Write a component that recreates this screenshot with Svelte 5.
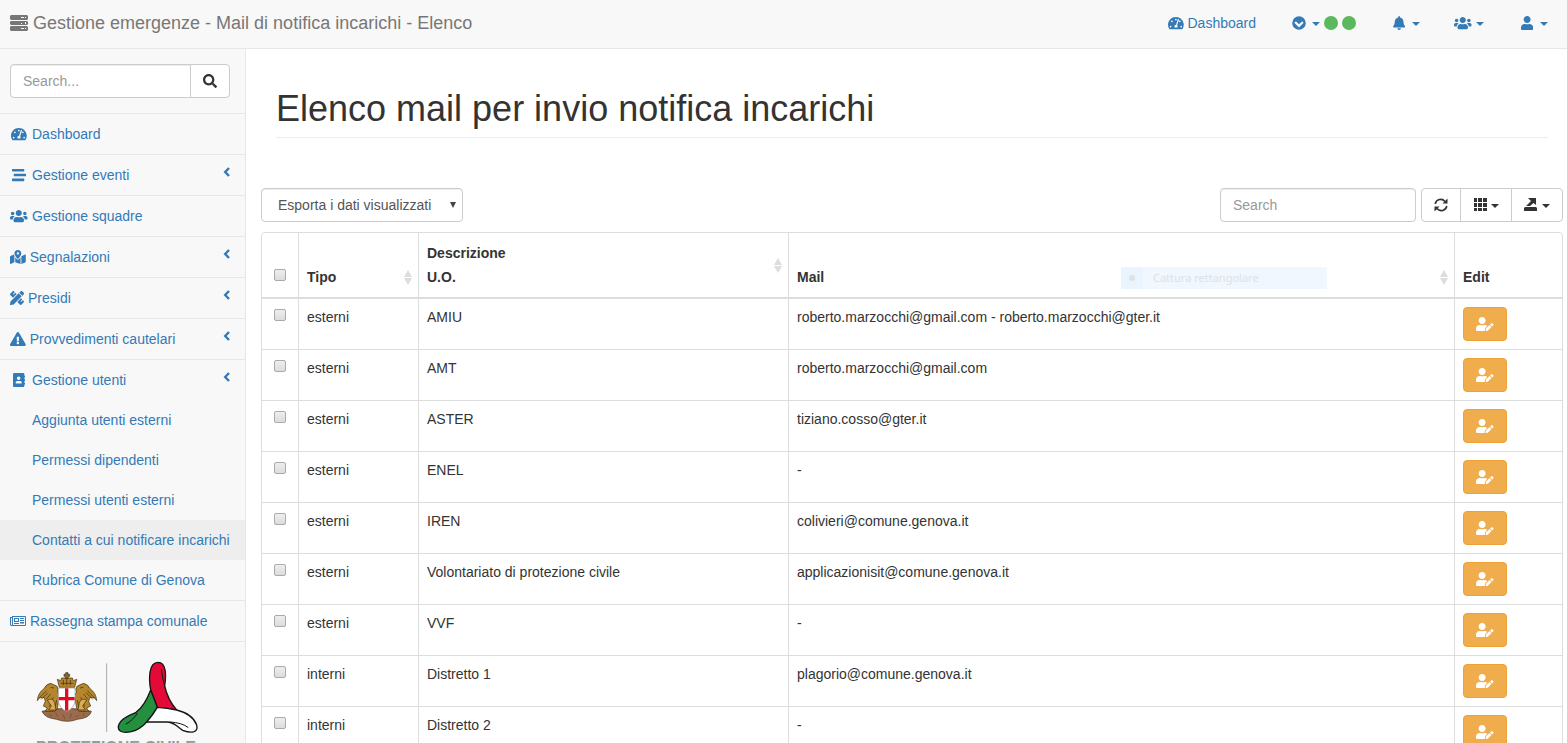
<script>
  const icons = {
    user: { w: 448, d: 'M224 256c70.7 0 128-57.3 128-128S294.7 0 224 0 96 57.3 96 128s57.3 128 128 128zm89.6 32h-16.7c-22.2 10.2-46.9 16-72.9 16s-50.6-5.8-72.9-16h-16.7C60.2 288 0 348.2 0 422.4V464c0 26.5 21.5 48 48 48h352c26.5 0 48-21.5 48-48v-41.6c0-74.2-60.2-134.4-134.4-134.4z' },
    users: { w: 640, d: 'M96 224c35.3 0 64-28.7 64-64s-28.7-64-64-64-64 28.7-64 64 28.7 64 64 64zm448 0c35.3 0 64-28.7 64-64s-28.7-64-64-64-64 28.7-64 64 28.7 64 64 64zm32 32h-64c-17.6 0-33.5 7.1-45.1 18.6 40.3 22.1 68.9 62 75.1 109.4h66c17.7 0 32-14.3 32-32v-32c0-35.3-28.7-64-64-64zm-256 0c61.9 0 112-50.1 112-112S381.9 32 320 32 208 82.1 208 144s50.1 112 112 112zm76.8 32h-8.3c-20.8 10-43.9 16-68.5 16s-47.6-6-68.5-16h-8.3C179.6 288 128 339.6 128 403.2V432c0 26.5 21.5 48 48 48h288c26.5 0 48-21.5 48-48v-28.8c0-63.6-51.6-115.2-115.2-115.2zm-223.7-13.4C161.5 263.1 145.6 256 128 256H64c-35.3 0-64 28.7-64 64v32c0 17.7 14.3 32 32 32h65.9c6.3-47.4 34.9-87.3 75.2-109.4z' },
    userEdit: { w: 640, d: 'M224 256c70.7 0 128-57.3 128-128S294.7 0 224 0 96 57.3 96 128s57.3 128 128 128zm89.6 32h-16.7c-22.2 10.2-46.9 16-72.9 16s-50.6-5.8-72.9-16h-16.7C60.2 288 0 348.2 0 422.4V464c0 26.5 21.5 48 48 48h274.9c-2.4-6.8-3.4-14-2.6-21.3l6.8-60.9 1.2-11.1 7.9-7.9 77.3-77.3c-24.5-27.7-60-45.5-99.9-45.5zm45.3 145.3l-6.8 61c-1.1 10.2 7.5 18.8 17.6 17.6l60.9-6.8 137.9-137.9-71.7-71.7-137.9 137.8zM633 268.9L595.1 231c-9.3-9.3-24.5-9.3-33.8 0l-37.8 37.8-4.1 4.1 71.8 71.7 41.8-41.8c9.3-9.4 9.3-24.5 0-33.9z' },
    bell: { w: 448, d: 'M224 512c35.32 0 63.97-28.65 63.97-64H160.03c0 35.35 28.65 64 63.97 64zm215.39-149.71c-19.32-20.76-55.47-51.99-55.47-154.29 0-77.7-54.48-139.9-127.94-155.16V32c0-17.67-14.32-32-31.98-32s-31.98 14.33-31.98 32v20.84C118.56 68.1 64.08 130.3 64.08 208c0 102.3-36.15 133.53-55.47 154.29-6 6.45-8.66 14.16-8.61 21.71.11 16.4 12.98 32 32.1 32h383.8c19.12 0 32-15.6 32.1-32 .05-7.55-2.61-15.27-8.61-21.71z' },
    warning: { w: 576, d: 'M569.517 440.013C587.975 472.007 564.806 512 527.94 512H48.054c-36.937 0-59.999-40.055-41.577-71.987L246.423 23.985c18.467-32.009 64.72-31.951 83.154 0l239.94 416.028zM288 354c-25.405 0-46 20.595-46 46s20.595 46 46 46 46-20.595 46-46-20.595-46-46-46zm-43.673-165.346l7.418 136c.347 6.364 5.609 11.346 11.982 11.346h48.546c6.373 0 11.635-4.982 11.982-11.346l7.418-136c.375-6.874-5.098-12.654-11.982-12.654h-63.383c-6.884 0-12.356 5.78-11.981 12.654z' },
    gauge: { w: 576, d: 'M288 32C128.94 32 0 160.94 0 320c0 52.8 14.25 102.26 39.06 144.8 5.61 9.62 16.3 15.2 27.44 15.2h443c11.14 0 21.83-5.58 27.44-15.2C561.75 422.26 576 372.8 576 320c0-159.06-128.94-288-288-288zM288 96a32 32 0 1 1 0 64a32 32 0 1 1 0-64zM96 352a32 32 0 1 1 0 64a32 32 0 1 1 0-64zM144 160a32 32 0 1 1 0 64a32 32 0 1 1 0-64zM480 352a32 32 0 1 1 0 64a32 32 0 1 1 0-64zM432 160a32 32 0 1 1 0 64a32 32 0 1 1 0-64zM343 416c6-10 9-20 9-32 0-17-7-33-18-44l67-199c4-13-3-26-15-31-13-4-27 3-31 16l-61 194c-33 2-60 29-60 64 0 12 4 22 9 32z' },
    book: { w: 448, d: 'M436 160c6.6 0 12-5.4 12-12v-40c0-6.6-5.4-12-12-12h-20V48c0-26.5-21.5-48-48-48H48C21.5 0 0 21.5 0 48v416c0 26.5 21.5 48 48 48h320c26.5 0 48-21.5 48-48v-48h20c6.6 0 12-5.4 12-12v-40c0-6.6-5.4-12-12-12h-20v-64h20c6.6 0 12-5.4 12-12v-40c0-6.6-5.4-12-12-12h-20v-64h20zm-228-32c35.3 0 64 28.7 64 64s-28.7 64-64 64-64-28.7-64-64 28.7-64 64-64zm112 236.8c0 10.6-10 19.2-22.4 19.2H118.4C106 384 96 375.4 96 364.8v-19.2c0-31.8 30.1-57.6 67.2-57.6h5c12.3 5.1 25.7 8 39.8 8s27.6-2.9 39.8-8h5c37.1 0 67.2 25.8 67.2 57.6v19.2z' },
    stream: { w: 512, d: 'M16 128h416c8.84 0 16-7.16 16-16V48c0-8.84-7.16-16-16-16H16C7.16 32 0 39.16 0 48v64c0 8.84 7.16 16 16 16zm480 80H80c-8.84 0-16 7.16-16 16v64c0 8.84 7.16 16 16 16h416c8.84 0 16-7.16 16-16v-64c0-8.84-7.16-16-16-16zm-64 176H16c-8.84 0-16 7.16-16 16v64c0 8.84 7.16 16 16 16h416c8.84 0 16-7.16 16-16v-64c0-8.84-7.16-16-16-16z' },
    map: { w: 576, d: 'M288 0c-69.59 0-126 56.41-126 126 0 56.26 82.35 158.8 113.9 196.02 6.39 7.54 17.82 7.54 24.2 0C331.65 284.8 414 182.26 414 126 414 56.41 357.59 0 288 0zm0 168c-23.2 0-42-18.8-42-42s18.8-42 42-42 42 18.8 42 42-18.8 42-42 42zM20.12 215.95A32.006 32.006 0 0 0 0 245.66v250.32c0 11.32 11.43 19.06 21.94 14.86L160 448V214.92c-8.84-15.98-16.07-31.54-21.25-46.42L20.12 215.95zM288 359.67c-14.07 0-27.38-6.18-36.51-16.96-19.66-23.2-40.57-49.62-59.49-76.72v182l192 64V266c-18.92 27.09-39.82 53.52-59.49 76.72-9.13 10.77-22.44 16.95-36.51 16.95zm266.06-198.51L416 224v288l139.88-55.95A31.996 31.996 0 0 0 576 426.34V176.02c0-11.32-11.43-19.06-21.94-14.86z' },
    tools: { w: 512, d: 'M109.46 244.04l134.58-134.56-44.12-44.12-61.68 61.68a7.919 7.919 0 0 1-11.21 0l-11.21-11.21c-3.1-3.1-3.1-8.12 0-11.21l61.68-61.68-33.64-33.65C131.47-3.1 111.39-3.1 99 9.29L9.29 99c-12.38 12.39-12.39 32.47 0 44.86l100.17 100.18zm388.47-116.8c18.76-18.76 18.75-49.17 0-67.93l-45.25-45.25c-18.76-18.76-49.18-18.76-67.95 0l-46.02 46.01 113.2 113.2 46.02-46.03zM316.08 82.71l-297 296.96L.32 487.11c-2.53 14.49 10.09 27.11 24.59 24.56l107.45-18.84L429.28 195.9 316.08 82.71zm186.63 285.43l-33.64-33.64-61.68 61.68c-3.1 3.1-8.12 3.1-11.21 0l-11.21-11.21c-3.09-3.1-3.09-8.12 0-11.21l61.68-61.68-44.14-44.14L267.93 402.5l100.21 100.2c12.39 12.39 32.47 12.39 44.86 0l89.71-89.7c12.39-12.39 12.39-32.47 0-44.86z' },
    news: { w: 585, d: 'M75 73H560l25 25V415l-25 24H40L0 400V110H75zM110 110V402H548V110zM37 146V390q18 24 36 0V146zM146 146H329V292H146zM183 183V256H292V183zM366 146H512V183H366zM366 219H512V256H366zM366 292H512V329H366zM146 329H329V366H146zM366 348H512V366H366z' },
    search: { w: 512, d: 'M505 442.7L405.3 343c-4.5-4.5-10.6-7-17-7H372c27.6-35.3 44-79.7 44-128C416 93.1 322.9 0 208 0S0 93.1 0 208s93.1 208 208 208c48.3 0 92.7-16.4 128-44v16.3c0 6.4 2.5 12.5 7 17l99.7 99.7c9.4 9.4 24.6 9.4 33.9 0l28.3-28.3c9.4-9.4 9.4-24.6.1-34zM208 336c-70.7 0-128-57.2-128-128 0-70.7 57.2-128 128-128 70.7 0 128 57.2 128 128 0 70.7-57.2 128-128 128z' },
    circleDown: { w: 512, d: 'M256 8a248 248 0 1 1 0 496a248 248 0 1 1 0-496zM256 300L160 206c-9-9-24-9-34 0l-26 26c-9 9-9 24 0 34l139 138c9 9 24 9 34 0l139-138c9-9 9-24 0-34l-26-26c-10-9-25-9-34 0z' }
  };

  const menu = [
    { label: 'Dashboard', icon: 'gauge', fixed: true },
    { label: 'Gestione eventi', icon: 'stream', fixed: true, arrow: true },
    { label: 'Gestione squadre', icon: 'users', fixed: true },
    { label: 'Segnalazioni', icon: 'map', arrow: true },
    { label: 'Presidi', icon: 'tools', arrow: true },
    { label: 'Provvedimenti cautelari', icon: 'warning', arrow: true },
    {
      label: 'Gestione utenti', icon: 'book', fixed: true, arrow: true,
      children: ['Aggiunta utenti esterni', 'Permessi dipendenti', 'Permessi utenti esterni', 'Contatti a cui notificare incarichi', 'Rubrica Comune di Genova']
    },
    { label: 'Rassegna stampa comunale', icon: 'news' }
  ];
  const current = 'Contatti a cui notificare incarichi';

  const rows = [
    ['esterni', 'AMIU', 'roberto.marzocchi@gmail.com - roberto.marzocchi@gter.it'],
    ['esterni', 'AMT', 'roberto.marzocchi@gmail.com'],
    ['esterni', 'ASTER', 'tiziano.cosso@gter.it'],
    ['esterni', 'ENEL', '-'],
    ['esterni', 'IREN', 'colivieri@comune.genova.it'],
    ['esterni', 'Volontariato di protezione civile', 'applicazionisit@comune.genova.it'],
    ['esterni', 'VVF', '-'],
    ['interni', 'Distretto 1', 'plagorio@comune.genova.it'],
    ['interni', 'Distretto 2', '-']
  ];
</script>

{#snippet icon(name, fixed = false)}
  <span class="icon" class:fixed>
    <svg viewBox="0 0 {icons[name].w} 512" height="14" fill="currentColor" fill-rule="evenodd" aria-hidden="true"><path d={icons[name].d} /></svg>
  </span>
{/snippet}

{#snippet caret()}
  <svg class="caret" viewBox="0 0 8 4" width="8" height="4" fill="currentColor" aria-hidden="true"><path d="M0 0h8L4 4z" /></svg>
{/snippet}

{#snippet sorter()}
  <svg class="sorter" viewBox="0 0 8 15" width="8" height="15" fill="#ddd" aria-hidden="true"><path d="M4 0l4 7H0zM0 8h8l-4 7z" /></svg>
{/snippet}

<div class="page">
  <header class="topbar">
    <a class="brand" href="#home">
      <svg viewBox="0 0 18 16" width="18" height="16" fill="currentColor" fill-rule="evenodd" aria-hidden="true">
        <path d="M1 0h16l1 1v3l-1 1H1L0 4V1zM11 2v1h3V2zM15 2v1h1V2zM1 6h16l1 1v2l-1 1H1L0 9V7zM11 8v1h1V8zM15 7v2h1V7zM1 11h16l1 1v3l-1 1H1l-1-1v-3zM11 13v1h3v-1zM15 13v1h1v-1z" />
      </svg>
      Gestione emergenze - Mail di notifica incarichi - Elenco
    </a>
    <nav class="toplinks">
      <a href="#dashboard">{@render icon('gauge')}Dashboard</a>
      <button aria-label="Stato">{@render icon('circleDown', true)}{@render caret()}<span class="dot"></span><span class="dot"></span></button>
      <button aria-label="Notifiche">{@render icon('bell', true)}{@render caret()}</button>
      <button aria-label="Squadre">{@render icon('users', true)}{@render caret()}</button>
      <button aria-label="Utente">{@render icon('user', true)}{@render caret()}</button>
    </nav>
  </header>

  <div class="body">
    <aside class="sidebar">
      <form class="menu-search">
        <input type="text" placeholder="Search..." aria-label="Cerca nel menu" />
        <button type="button" aria-label="Cerca">{@render icon('search')}</button>
      </form>
      <ul class="menu">
        {#each menu as item}
          <li>
            <a href="#menu">
              {@render icon(item.icon, item.fixed)}
              <span class="label">{item.label}</span>
              {#if item.arrow}
                <svg class="arrow" viewBox="0 0 7 14" width="7" height="14" fill="none" stroke="currentColor" stroke-width="2.4" aria-hidden="true"><path d="M6 3L2.200 7 6 11" /></svg>
              {/if}
            </a>
            {#if item.children}
              <ul class="submenu">
                {#each item.children as child}
                  <li><a href="#menu" class:current={child === current}>{child}</a></li>
                {/each}
              </ul>
            {/if}
          </li>
        {/each}
      </ul>
      <div class="logos">
        <svg viewBox="108 180 492 222" width="164" height="74" role="img" aria-label="Comune di Genova, Protezione Civile">
          <g stroke="#3b2a10" stroke-width="2" stroke-linejoin="round">
            <path d="M126 334q74-18 148 0q-4 20-42 24q-30 12-62 0q-36-4-44-24z" fill="#9a6b4c" />
            <path d="M146 342l10 6M166 338l8 12M190 344l4 14M214 340l-4 14M236 344l-8 8M254 340l-6 8" fill="none" stroke="#6b452c" />
            <g id="griffin" fill="#b5862d">
              <path d="M112 302q2-24 20-36q6-14 20-16l18 8q8 10 2 18l8 12-4 12-4 26-8 8h-28l6-10-12-6 6-14-4-12-14 2z" />
              <path d="M118 294l22-22M124 298l20-20M138 298l14-16M152 262l10 2M148 300l16 20M160 292l-12 28M170 300l-6 28" fill="none" />
              <path d="M142 300q16-8 22 8l4 22h-22l8-12z" fill="#d8ad55" />
            </g>
            <use href="#griffin" transform="matrix(-1 0 0 1 402 0)" />
            <path d="M178 262l-6-24 10 4 3-8h32l3 8 10-4-6 24z" fill="#b5862d" />
            <path d="M197 236v-7h-5v-6h5v-5h7v5h5v6h-5v7z" fill="#8b6a2c" />
            <path d="M182 250h38M190 240v16M200 238v18M211 240v16" fill="none" />
            <path d="M175 264h50v38q-2 23-25 32q-23-9-25-32z" fill="#fff" stroke="#999" />
          </g>
          <path d="M195 265h10v66l-5 2-5-2zM176 291h48v10h-48z" fill="#e30b20" />
          <path d="M320 190v206" stroke="#aaa" stroke-width="3" />
          <g stroke="#151515" stroke-width="4" stroke-linejoin="round" stroke-linecap="round">
            <path d="M452 270C446 235 446 187 474 187C499 187 499 225 494 258C500 285 514 312 530 330L472 322Z" fill="#e40a38" />
            <path d="M452 270L472 322Q458 346 440 366Q418 390 394 395C362 402 350 390 357 373C366 352 392 346 408 337Q434 318 452 270Z" fill="#23903f" />
            <path d="M472 322Q502 324 530 330C562 338 582 352 590 375C596 400 572 400 548 391C530 380 524 366 500 366H440Q458 346 472 322Z" fill="#fff" />
            <path d="M484 208Q487 234 494 258M378 372Q398 362 412 340M510 366Q546 368 564 382" fill="none" stroke-width="3" />
          </g>
        </svg>
        <div class="caption">PROTEZIONE CIVILE</div>
      </div>
    </aside>

    <main>
      <h1>Elenco mail per invio notifica incarichi</h1>
      <div class="toolbar">
        <div class="export">
          <select aria-label="Esporta i dati">
            <option>Esporta i dati visualizzati</option>
          </select>
          <svg viewBox="0 0 6 6" width="6" height="6" fill="#444" aria-hidden="true"><path d="M0 0h6L3 6z" /></svg>
        </div>
        <input class="table-search" type="text" placeholder="Search" aria-label="Cerca nella tabella" />
        <div class="group">
          <button aria-label="Aggiorna">
            <svg viewBox="0 0 14 14" width="14" height="14" fill="none" stroke="currentColor" stroke-width="1.6" aria-hidden="true">
              <path d="M1.200 6A5.600 5.600 0 0 1 11 3.400M12.800 8A5.600 5.600 0 0 1 3 10.600" />
              <path d="M13.500 0.500v5H8.500zM.5 13.500V8.500H5.500z" fill="currentColor" stroke="none" />
            </svg>
          </button>
          <button aria-label="Colonne">
            <svg viewBox="0 0 14 14" width="14" height="14" fill="currentColor" aria-hidden="true">
              <path d="M1 0h3v4H1zM5 0h4v4H5zM10 0h4v4h-4zM1 5h3v4H1zM5 5h4v4H5zM10 5h4v4h-4zM1 10h3v3H1zM5 10h4v3H5zM10 10h4v3h-4z" />
            </svg>
            {@render caret()}
          </button>
          <button aria-label="Esporta">
            <svg viewBox="0 0 14 14" width="14" height="14" fill="currentColor" aria-hidden="true">
              <path d="M1 9h11l1 1v3H0v-3zM4 0h8v7L9.500 5 6 8H2l5-5z" />
            </svg>
            {@render caret()}
          </button>
        </div>
      </div>

      <div class="table-box">
        <table>
          <thead>
            <tr>
              <th class="check"><input type="checkbox" aria-label="Seleziona tutto" /></th>
              <th class="tipo"><div class="head">Tipo{@render sorter()}</div></th>
              <th class="desc"><div class="head">Descrizione<br />U.O.{@render sorter()}</div></th>
              <th class="mail">
                <div class="head">Mail{@render sorter()}</div>
                <div class="capture"><span class="radio"></span><span class="capture-text">Cattura rettangolare</span></div>
              </th>
              <th class="edit"><div class="head">Edit</div></th>
            </tr>
          </thead>
          <tbody>
            {#each rows as [tipo, desc, mail]}
              <tr>
                <td class="check"><input type="checkbox" aria-label="Seleziona {desc}" /></td>
                <td>{tipo}</td>
                <td>{desc}</td>
                <td>{mail}</td>
                <td><button class="edit-button" aria-label="Modifica {desc}">{@render icon('userEdit')}</button></td>
              </tr>
            {/each}
          </tbody>
        </table>
      </div>
    </main>
  </div>
</div>

<style>
  :global(body) {
    margin: 0;
    background: #fff;
  }
  .page, .page * {
    box-sizing: border-box;
  }
  .page {
    display: flex;
    flex-direction: column;
    height: 100vh;
    overflow: hidden;
    font: 14px/20px "Liberation Sans", Arial, sans-serif;
    color: #333;
  }
  a {
    color: #337ab7;
    text-decoration: none;
  }
  button, input, select {
    font: inherit;
  }
  button {
    cursor: pointer;
  }
  svg {
    display: block;
    flex: none;
  }
  .icon {
    display: inline-flex;
    flex: none;
    justify-content: center;
  }
  .fixed {
    width: 18px;
  }
  .caret {
    margin-top: 2px;
  }

  .topbar {
    display: flex;
    flex: none;
    justify-content: space-between;
    align-items: center;
    padding: 0 19px 2px 10px;
    height: 49px;
    background: #f8f8f8;
    border-bottom: 1px solid #e7e7e7;
  }
  .brand {
    display: flex;
    align-items: center;
    gap: 5px;
    color: #777;
    font-size: 18px;
  }
  .toplinks {
    display: flex;
    gap: 34px;
  }
  .toplinks a, .toplinks button {
    display: flex;
    align-items: center;
    gap: 4px;
    padding: 0;
    border: 0;
    background: none;
    color: #337ab7;
  }
  .dot {
    width: 14px;
    height: 14px;
    border-radius: 50%;
    background: #5cb85c;
  }

  .body {
    display: flex;
    flex: 1;
    min-height: 0;
  }
  .sidebar {
    flex: none;
    width: 246px;
    background: #f8f8f8;
    border-right: 1px solid #e7e7e7;
  }
  .menu-search {
    display: flex;
    padding: 15px 15px 15px 10px;
    border-bottom: 1px solid #e7e7e7;
  }
  input[type="text"] {
    min-width: 0;
    height: 34px;
    padding: 6px 12px;
    border: 1px solid #ccc;
    border-radius: 4px;
    background: #fff;
    box-shadow: inset 0 1px 1px rgba(0, 0, 0, 0.075);
    color: #555;
  }
  input::placeholder {
    color: #999;
    opacity: 1;
  }
  .menu-search input {
    flex: 1;
    border-radius: 4px 0 0 4px;
  }
  .menu-search button {
    display: flex;
    align-items: center;
    justify-content: center;
    width: 40px;
    margin-left: -1px;
    border: 1px solid #ccc;
    border-radius: 0 4px 4px 0;
    background: #fff;
    color: #333;
  }
  ul {
    margin: 0;
    padding: 0;
    list-style: none;
  }
  .menu > li {
    border-bottom: 1px solid #e7e7e7;
  }
  .menu a {
    display: flex;
    align-items: center;
    gap: 4px;
    padding: 10px 15px 10px 10px;
  }
  .label {
    flex: 1;
  }
  .arrow {
    align-self: flex-start;
  }
  .submenu a {
    padding-left: 32px;
    padding-right: 0;
    white-space: nowrap;
  }
  .submenu .current {
    background: #eee;
  }
  .logos {
    padding: 18px 36px 0;
  }
  .caption {
    margin-top: 4px;
    color: #999;
    font-size: 16px;
    font-weight: bold;
    white-space: nowrap;
  }

  main {
    flex: 1;
    min-width: 0;
    padding: 0 4px 0 15px;
  }
  h1 {
    margin: 40px 15px 50px;
    padding-bottom: 8px;
    border-bottom: 1px solid #eee;
    font-size: 36px;
    line-height: 40px;
    font-weight: 400;
  }
  .toolbar {
    display: flex;
    gap: 5px;
    margin-bottom: 10px;
  }
  .export {
    position: relative;
    margin-right: auto;
  }
  .export select {
    display: block;
    appearance: none;
    width: 202px;
    height: 34px;
    padding: 6px 16px;
    border: 1px solid #ccc;
    border-radius: 4px;
    background: #fff;
    box-shadow: inset 0 1px 1px rgba(0, 0, 0, 0.075);
    color: #555;
  }
  .export svg {
    position: absolute;
    top: 14px;
    right: 7px;
    pointer-events: none;
  }
  .table-search {
    width: 196px;
  }
  .group {
    display: flex;
  }
  .group button {
    display: flex;
    align-items: center;
    gap: 4px;
    padding: 0 12px;
    border: 1px solid #ccc;
    margin-left: -1px;
    background: #fff;
    color: #333;
  }
  .group button:first-child {
    margin-left: 0;
    border-radius: 4px 0 0 4px;
  }
  .group button:last-child {
    border-radius: 0 4px 4px 0;
  }

  .table-box {
    border: 1px solid #ddd;
    border-radius: 4px;
  }
  table {
    width: 100%;
    table-layout: fixed;
    border-spacing: 0;
  }
  th, td {
    padding: 8px;
    border-left: 1px solid #ddd;
    border-bottom: 1px solid #ddd;
    text-align: left;
    vertical-align: top;
  }
  th {
    position: relative;
    padding: 0;
    border-bottom-width: 2px;
    vertical-align: bottom;
  }
  .check {
    width: 36px;
    border-left: 0;
    text-align: center;
  }
  th.check {
    padding-bottom: 16px;
  }
  .tipo {
    width: 120px;
  }
  .desc {
    width: 370px;
  }
  .edit {
    width: 108px;
  }
  .head {
    position: relative;
    padding: 8px;
    line-height: 24px;
  }
  .sorter {
    position: absolute;
    top: calc(50% - 7px);
    right: 6px;
  }
  input[type="checkbox"] {
    appearance: none;
    display: block;
    width: 12px;
    height: 12px;
    margin: 2px auto 0;
    border: 1px solid #aaa;
    border-radius: 2px;
    background: linear-gradient(#eee, #dcdcdc);
  }
  .edit-button {
    display: flex;
    align-items: center;
    justify-content: center;
    width: 44px;
    height: 34px;
    padding: 0;
    border: 1px solid #eea236;
    border-radius: 4px;
    background: #f0ad4e;
    color: #fff;
  }
  .capture {
    position: absolute;
    right: 127px;
    bottom: 8px;
    display: flex;
    align-items: center;
    width: 206px;
    height: 22px;
    background: #f0f7fe;
    color: #dfe1e4;
    font: 11px/22px "Noto Sans", sans-serif;
  }
  .radio {
    display: flex;
    align-items: center;
    justify-content: center;
    width: 22px;
    height: 22px;
    background: #e9f4fe;
  }
  .radio::before {
    content: "";
    width: 6px;
    height: 6px;
    border-radius: 50%;
    background: #e0e2e4;
  }
  .capture-text {
    padding-left: 10px;
  }
</style>
